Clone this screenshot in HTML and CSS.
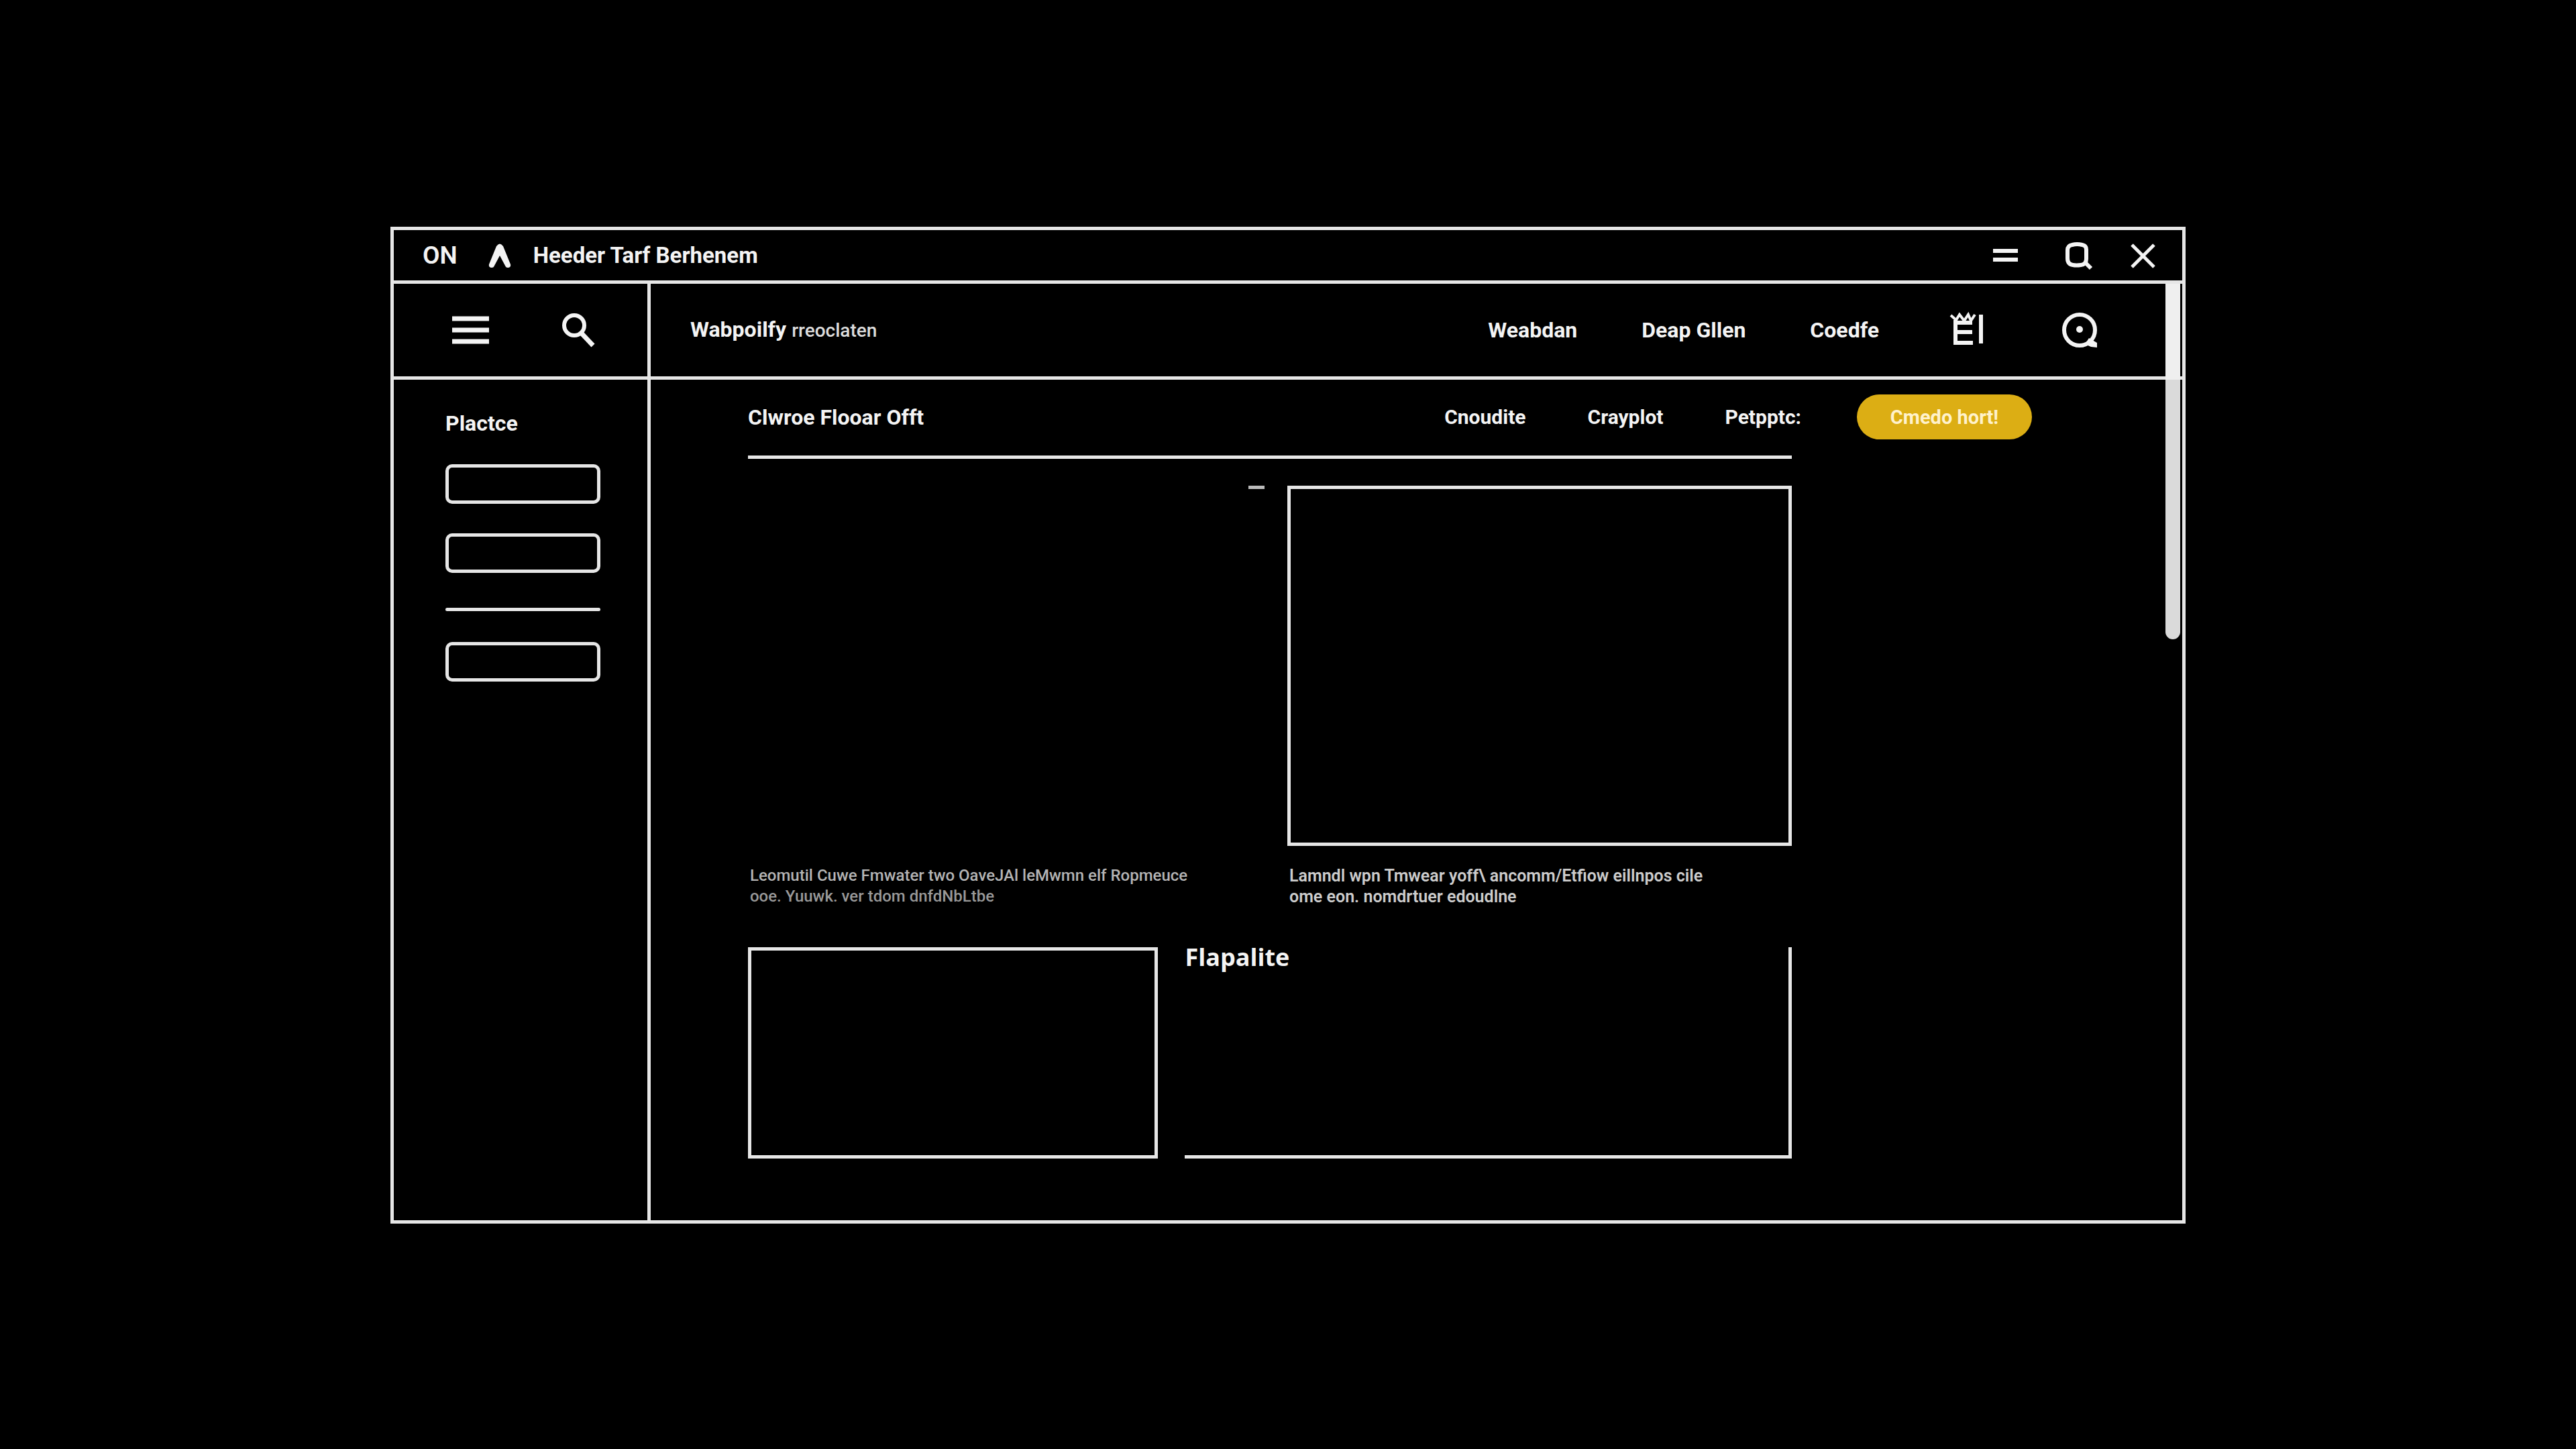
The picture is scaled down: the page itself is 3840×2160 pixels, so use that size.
FILE: index.html
```html
<!DOCTYPE html>
<html lang="en">
<head>
<meta charset="utf-8">
<meta name="viewport" content="width=device-width, initial-scale=1">
<title>Heeder Tarf Berhenem</title>
<link rel="stylesheet" href="styles.css">
</head>
<body>
<div class="window">
  <header class="titlebar">
    <span class="titlebar-state">ON</span>
    <svg class="titlebar-logo" viewBox="0 0 34 36" width="34" height="36" aria-hidden="true"><path d="M1 31L12 4Q17 -3 22 4L33 31Q34 36 29 36Q26 36 25 33L17 18L9 33Q8 36 5 36Q0 36 1 31Z" fill="currentColor"/></svg>
    <h1 class="titlebar-title">Heeder Tarf Berhenem</h1>
    <div class="window-controls">
      <button class="icon-button control-minimize" type="button" aria-label="Minimize"><svg viewBox="0 0 40 40" width="40" height="40"><path d="M2 13H39M2 26H39" fill="none" stroke="currentColor" stroke-width="6"/></svg></button>
      <button class="icon-button" type="button" aria-label="Find"><svg viewBox="0 0 46 46" width="46" height="46"><path d="M14 7Q21 5 29 7Q35 8 35 14V28Q35 36 27 37Q20 38 15 37Q7 36 7 27V15Q7 8 14 7ZM34 34L42 42" fill="none" stroke="currentColor" stroke-width="6"/></svg></button>
      <button class="icon-button" type="button" aria-label="Close"><svg viewBox="0 0 40 40" width="40" height="40"><path d="M3 4L36 37M36 4L3 37" fill="none" stroke="currentColor" stroke-width="5"/></svg></button>
    </div>
  </header>

  <div class="panes">
    <div class="tools">
      <button class="icon-button" type="button" aria-label="Menu"><svg viewBox="0 0 56 56" width="56" height="56"><path d="M0 11H55M0 28H55M0 45H55" fill="none" stroke="currentColor" stroke-width="7"/></svg></button>
      <button class="icon-button" type="button" aria-label="Search"><svg viewBox="0 0 56 56" width="56" height="56"><circle cx="21" cy="21" r="15" fill="none" stroke="currentColor" stroke-width="6"/><path d="M32 33L49 51" stroke="currentColor" stroke-width="7"/></svg></button>
    </div>
    <div class="toolbar">
      <p class="brand">Wabpoilfy <small class="brand-note">rreoclaten</small></p>
      <nav class="site-nav" aria-label="Site">
        <a href="#weabdan">Weabdan</a>
        <a href="#deap-gllen">Deap Gllen</a>
        <a href="#coedfe">Coedfe</a>
        <button class="icon-button" type="button" aria-label="Library"><svg viewBox="0 0 72 56" width="72" height="56"><path d="M18 13V47M15 47H44M18 31H43M18 17H43" fill="none" stroke="currentColor" stroke-width="6"/><path d="M11 6L19 13L24 5L31 14L37 5L41 14L47 5" fill="none" stroke="currentColor" stroke-width="4"/><path d="M56 5V48" stroke="currentColor" stroke-width="6"/></svg></button>
        <button class="icon-button" type="button" aria-label="Account"><svg viewBox="0 0 72 56" width="72" height="56"><circle cx="35" cy="28" r="23" fill="none" stroke="currentColor" stroke-width="6"/><circle cx="35" cy="27" r="5" fill="currentColor"/><path d="M49 40L61 47V54L52 53L43 49Z" fill="currentColor"/></svg></button>
      </nav>
    </div>

    <aside class="sidebar">
      <h2 class="sidebar-title">Plactce</h2>
      <input class="field" type="text" aria-label="Plactce one">
      <input class="field" type="text" aria-label="Plactce two">
      <hr class="sidebar-rule">
      <input class="field" type="text" aria-label="Plactce three">
    </aside>

    <main class="content">
      <div class="page-head">
        <h2 class="page-title">Clwroe Flooar Offt</h2>
        <nav class="tabs" aria-label="Page">
          <a href="#cnoudite">Cnoudite</a>
          <a href="#crayplot">Crayplot</a>
          <a href="#petpptc">Petpptc:</a>
        </nav>
        <button class="cta" type="button">Cmedo hort!</button>
      </div>
      <div class="page-body">
        <div class="features">
          <figure class="feature">
            <div class="picture picture-open"><span class="dash"></span></div>
            <figcaption class="caption caption-dim">Leomutil Cuwe Fmwater two OaveJAl leMwmn elf Ropmeuce<br><span class="caption-fade">ooe. Yuuwk. ver tdom dnfdNbLtbe</span></figcaption>
          </figure>
          <figure class="feature">
            <div class="picture picture-framed"></div>
            <figcaption class="caption">Lamndl wpn Tmwear yoff\ ancomm/Etfiow eillnpos cile<br>ome eon. nomdrtuer edoudlne</figcaption>
          </figure>
        </div>
        <div class="cards">
          <section class="card card-framed" aria-label="Preview"></section>
          <section class="card card-open"><h3 class="card-title">Flapalite</h3></section>
        </div>
      </div>
    </main>
    <div class="scrollbar" aria-hidden="true"></div>
  </div>
</div>
</body>
</html>
```

FILE: styles.css
```css
:root {
  --line: #e6e6e6;
  --stroke: 5px;
  --text: #f4f4f4;
}

* { box-sizing: border-box; }

body {
  margin: 0;
  padding: 338px 582px;
  background: #000;
  color: var(--text);
  font-family: Roboto, "Liberation Sans", sans-serif;
  font-size: 32px;
  font-weight: 700;
  line-height: 40px;
}

h1, h2, h3, p, figure { margin: 0; font-size: inherit; font-weight: inherit; }
a { color: inherit; text-decoration: none; }
svg { display: block; }

.icon-button {
  padding: 0;
  border: 0;
  background: none;
  color: inherit;
}

.window { border: var(--stroke) solid var(--line); }

.titlebar {
  display: flex;
  align-items: center;
  height: 80px;
  padding: 0 38px 0 43px;
  border-bottom: var(--stroke) solid var(--line);
}
.titlebar-state { font-size: 37px; font-weight: 600; }
.titlebar-logo { margin: 0 33px 0 46px; }
.titlebar-title { font-size: 33px; }
.window-controls {
  display: flex;
  align-items: center;
  gap: 54px;
  margin-left: auto;
}
.control-minimize { margin-right: 12px; }

.panes {
  position: relative;
  display: grid;
  grid-template-columns: 383px 1fr;
  grid-template-rows: 143px auto;
}

.tools, .toolbar {
  display: flex;
  align-items: center;
  border-bottom: var(--stroke) solid var(--line);
}
.tools, .sidebar { border-right: var(--stroke) solid var(--line); }
.tools { gap: 105px; padding-left: 87px; }
.toolbar { justify-content: space-between; padding: 0 116px 0 59px; }
.brand-note { font-size: 28px; font-weight: 500; color: #ddd; }
.site-nav { display: flex; align-items: center; gap: 96px; }

.sidebar { padding: 45px 70px 45px 77px; }
.sidebar-title { margin-bottom: 41px; }
.field {
  display: block;
  width: 100%;
  height: 59px;
  margin: 0 0 44px;
  padding: 0 16px;
  border: var(--stroke) solid var(--line);
  border-radius: 10px;
  background: none;
  color: inherit;
  font: inherit;
}
.sidebar-rule {
  height: 5px;
  margin: 52px 0 46px;
  border: 0;
  border-radius: 3px;
  background: var(--line);
}

.content { padding: 22px 0 92px 145px; }
.page-head {
  display: flex;
  align-items: center;
  padding-right: 224px;
}
.tabs {
  display: flex;
  gap: 92px;
  margin: 0 83px 0 auto;
  font-size: 30px;
}
.cta {
  width: 261px;
  height: 67px;
  padding: 0;
  border: 0;
  border-radius: 34px;
  background: #dcae14;
  color: #fff2cc;
  font: inherit;
  font-size: 29px;
}

.page-body { margin-right: 582px; }
.features {
  display: grid;
  grid-template-columns: 769fr 751fr;
  gap: 34px;
  margin-top: 24px;
  padding-top: 40px;
  border-top: var(--stroke) solid var(--line);
}
.picture { height: 537px; margin-bottom: 29px; }
.picture-framed { border: var(--stroke) solid var(--line); }
.picture-open { display: flex; justify-content: flex-end; }
.dash { width: 24px; height: 5px; background: #bbb; }
.caption {
  padding-left: 3px;
  color: #ccc;
  font-size: 25px;
  font-weight: 600;
  line-height: 31px;
  white-space: nowrap;
}
.caption-dim { color: #b4b4b4; font-size: 24px; font-weight: 500; }
.caption-fade { color: #999; }

.cards {
  display: grid;
  grid-template-columns: 611fr 904fr;
  gap: 40px;
  margin-top: 60px;
}
.card { height: 315px; border: 0 solid var(--line); }
.card-framed { border-width: var(--stroke); }
.card-open { border-width: 0 var(--stroke) var(--stroke) 0; }
.card-title {
  font-family: "Open Sans", sans-serif;
  font-size: 36px;
  font-weight: 700;
  line-height: 30px;
}

.scrollbar {
  position: absolute;
  top: 0;
  right: 3px;
  width: 22px;
  height: 530px;
  border-radius: 0 0 11px 11px;
  background: linear-gradient(#efefef 143px, #dadada 143px);
}
```
